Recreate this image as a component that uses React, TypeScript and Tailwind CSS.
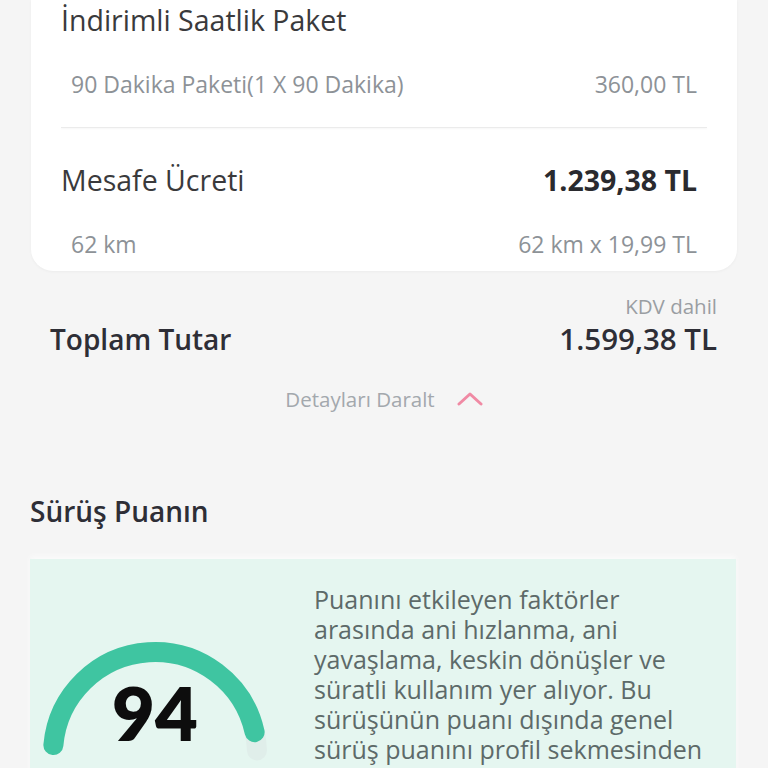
import React from 'react';

// Trip summary: price breakdown card, total, and driving score panel
const font = { fontFamily: '"Open Sans", Lato, sans-serif' };

const scoreText = [
    'Puanını etkileyen faktörler',
    'arasında ani hızlanma, ani',
    'yavaşlama, keskin dönüşler ve',
    'süratli kullanım yer alıyor. Bu',
    'sürüşünün puanı dışında genel',
    'sürüş puanını profil sekmesinden',
];

const pt = (deg: number, r = 102, cx = 125, cy = 125) => {
    const a = (deg * Math.PI) / 180;
    return [cx + r * Math.cos(a), cy - r * Math.sin(a)];
};

const Gauge = ({ score }: { score: number }) => {
    const [sx, sy] = pt(175);
    const [tx, ty] = pt(2);
    const [ex, ey] = pt(175 - (173 * score) / 100);
    return (
        <svg width="250" height="200" viewBox="0 0 250 200" className="shrink-0">
            <path d={`M ${sx} ${sy} A 102 102 0 0 1 ${tx} ${ty}`} fill="none" stroke="#e0eeea" strokeWidth="20" strokeLinecap="round" />
            <path d={`M ${sx} ${sy} A 102 102 0 0 1 ${ex} ${ey}`} fill="none" stroke="#3fc5a1" strokeWidth="20" strokeLinecap="round" />
            <text x="125" y="112" textAnchor="middle" fontSize="74" fontWeight="800" fill="#0d0d0d" style={{ fontFamily: 'Lato, sans-serif' }}>
                {score}
            </text>
        </svg>
    );
};

const Row = ({ left, right, bold }: { left: string; right: string; bold?: boolean }) => (
    <div className="flex h-[40px] items-center justify-between pr-[10px] text-[28.5px] text-[#3a3a3c]">
        <span>{left}</span>
        <span className={bold ? 'font-bold text-[#2a2a2e]' : ''}>{right}</span>
    </div>
);

const SubRow = ({ left, right }: { left: string; right: string }) => (
    <div className="flex h-[30px] items-center justify-between px-[10px] text-[23px] text-[#8d9297]">
        <span>{left}</span>
        <span>{right}</span>
    </div>
);

const App = () => {
    return (
        <div className="h-[768px] w-[768px] overflow-hidden bg-[#f5f5f5]" style={font}>
            {/* price breakdown card */}
            <div className="mx-[31px] w-[706px] rounded-b-[22px] bg-white px-[30px] pb-[12px] shadow-[0_1px_3px_rgba(0,0,0,0.04)]">
                <Row left="İndirimli Saatlik Paket" right="" />
                <div className="mt-[29px]">
                    <SubRow left="90 Dakika Paketi(1 X 90 Dakika)" right="360,00 TL" />
                </div>
                <div className="mt-[28px] h-px bg-[#ebebeb] shadow-[0_1px_2px_rgba(0,0,0,0.05)]" />
                <div className="mt-[32px]">
                    <Row left="Mesafe Ücreti" right="1.239,38 TL" bold />
                </div>
                <div className="mt-[29px]">
                    <SubRow left="62 km" right="62 km x 19,99 TL" />
                </div>
            </div>

            {/* total */}
            <div className="pl-[50px] pr-[51px]">
                <div className="mt-[23px] flex h-[24px] items-center justify-end text-[20.5px] text-[#9a9ea3]">KDV dahil</div>
                <div className="mt-[3px] flex h-[36px] items-center justify-between font-semibold text-[#2e2e36]">
                    <span className="text-[28px]">Toplam Tutar</span>
                    <span className="text-[29.5px]">1.599,38 TL</span>
                </div>
            </div>

            <div className="mt-[30px] flex h-[24px] items-center justify-center gap-[22px]">
                <span className="text-[20.5px] text-[#a3a8ad]">Detayları Daralt</span>
                <svg width="26" height="16" viewBox="0 0 26 16">
                    <path d="M2 13 L13 3 L24 13" fill="none" stroke="#f08aa4" strokeWidth="3" strokeLinecap="round" strokeLinejoin="round" />
                </svg>
            </div>

            {/* driving score */}
            <div className="mt-[82px] flex h-[36px] items-center pl-[30px] text-[28px] font-semibold text-[#2e2e36]">
                Sürüş Puanın
            </div>
            <div className="ml-[30px] mt-[30px] flex h-[260px] w-[706px] gap-[34px] bg-[#e5f6f0] shadow-[0_-3px_6px_rgba(255,255,255,0.6)]">
                <div className="pt-[70px]">
                    <Gauge score={94} />
                </div>
                <div className="flex flex-col pt-[25px] text-[25px] text-[#5d6a69]">
                    {scoreText.map((line, i) => (
                        <div key={i} className="flex h-[30px] items-center whitespace-nowrap leading-none">
                            {line}
                        </div>
                    ))}
                </div>
            </div>
        </div>
    );
};

export default App;
